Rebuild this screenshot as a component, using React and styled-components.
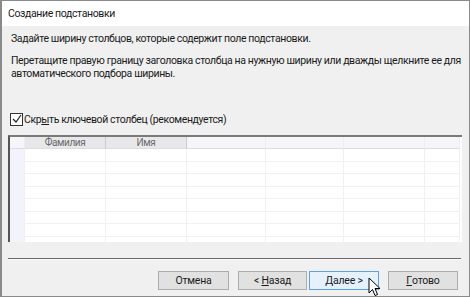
import React from 'react';
import styled, { createGlobalStyle } from 'styled-components';

const GlobalStyle = createGlobalStyle`
  html, body {
    margin: 0;
    padding: 0;
    background: #f0f0f0;
  }
  body {
    font-family: Roboto, "Noto Sans", sans-serif;
    font-size: 10.5px;
    letter-spacing: -0.38px;
    color: #1a1a1a;
  }
`;

const Window = styled.div`
  width: 470px;
  height: 297px;
  box-sizing: border-box;
  border: 1px solid #8a8a8a;
  border-left-width: 2px;
  background: #f0f0f0;
  position: relative;
  overflow: hidden;
`;

const TitleBar = styled.div`
  height: 25px;
  background: #ffffff;
  display: flex;
  align-items: center;
  padding-left: 6px;
  font-size: 10.5px;
  color: #1a1a1a;
`;

const Body = styled.div`
  display: flex;
  flex-direction: column;
  padding: 6px 8px 0 6px;
  & > * {
    flex-shrink: 0;
  }
`;

const Text = styled.p`
  margin: 0 0 ${p => p.gap || 0}px 0;
  line-height: 13px;
  padding-left: 3px;
  white-space: nowrap;
`;

const CheckRow = styled.label`
  display: flex;
  align-items: center;
  gap: 1px;
  margin-top: ${p => p.top}px;
  padding-left: 2px;
  height: 14px;
`;

const Box = styled.span`
  width: 11px;
  height: 11px;
  border: 1px solid #333;
  background: #fff;
  display: flex;
  align-items: center;
  justify-content: center;
`;

const Grid = styled.div`
  margin-top: 9px;
  height: 105px;
  width: 452px;
  background: #ffffff;
  border-top: 2px solid #7a7a7a;
  border-left: 2px solid #555;
  display: grid;
  grid-template-columns: 15px 81px 81px 79px 78px 81px 35px;
  grid-template-rows: 12px;
  grid-auto-rows: 12.5px;
  overflow: hidden;
`;

const HeadCell = styled.div`
  background: ${p => (p.blank ? '#f5f5fa' : '#e8e8eb')};
  border-right: 1px solid ${p => (p.blank ? '#eeeef2' : '#c9c9cf')};
  border-bottom: 1px solid #dcdce2;
  color: #6a6a6a;
  font-size: 10px;
  display: flex;
  align-items: center;
  justify-content: center;
  line-height: 1;
`;

const Cell = styled.div`
  background: ${p => (p.side ? '#f3f3fb' : '#ffffff')};
  border-right: 1px solid #f0f0f2;
  border-bottom: 1px solid ${p => (p.side ? '#f3f3fb' : '#f1f1f3')};
`;

const Separator = styled.div`
  margin-top: 16px;
  width: 453px;
  height: 1px;
  background: #6a6a6a;
  border-bottom: 1px solid #fafafa;
`;

const Buttons = styled.div`
  display: flex;
  justify-content: flex-end;
  padding-right: 3px;
  margin-top: 11px;
`;

const Button = styled.button`
  width: ${p => p.w || 71}px;
  height: 19px;
  margin-left: ${p => p.ml}px;
  box-sizing: border-box;
  border: 1px solid ${p => (p.active ? '#5ea2e6' : '#adadad')};
  background: ${p => (p.active ? '#e5f1fb' : '#e1e1e1')};
  font-family: Roboto, "Noto Sans", sans-serif;
  font-size: 10.5px;
  letter-spacing: -0.2px;
  color: #1a1a1a;
  padding: 0;
  display: flex;
  align-items: center;
  justify-content: center;
  u {
    text-decoration: underline;
  }
`;

const Cursor = styled.svg`
  position: absolute;
  left: 366px;
  top: 276px;
`;

const cols = ['', 'Фамилия', 'Имя', '', '', '', ''];

export default function App() {
  const rows = Array.from({ length: 8 });
  return (
    <>
      <GlobalStyle />
      <Window>
        <TitleBar>Создание подстановки</TitleBar>
        <Body>
          <Text gap={9}>Задайте ширину столбцов, которые содержит поле подстановки.</Text>
          <Text>
            Перетащите правую границу заголовка столбца на нужную ширину или дважды щелкните ее для
            <br />
            автоматического подбора ширины.
          </Text>
          <CheckRow top={32}>
            <Box>
              <svg width="10" height="10" viewBox="0 0 10 10">
                <path d="M1 5 L4 8 L9 1" fill="none" stroke="#222" strokeWidth="1.2" />
              </svg>
            </Box>
            <span>
              Скр<u>ы</u>ть ключевой столбец (рекомендуется)
            </span>
          </CheckRow>
          <Grid>
            {cols.map((c, i) => (
              <HeadCell key={'h' + i} blank={i === 0 || i > 2}>
                {c}
              </HeadCell>
            ))}
            {rows.map((_, r) =>
              cols.map((_, i) => <Cell key={r + '-' + i} side={i === 0} />)
            )}
          </Grid>
          <Separator />
          <Buttons>
            <Button ml={0}>Отмена</Button>
            <Button ml={9} w={69}>
              &lt;&nbsp;<u>Н</u>азад
            </Button>
            <Button ml={2} w={70} active>
              <u>Д</u>алее &gt;
            </Button>
            <Button ml={9} w={70}>
              <u>Г</u>отово
            </Button>
          </Buttons>
        </Body>
        <Cursor width="14" height="21" viewBox="0 0 14 21">
          <path
            d="M1 1 L1 16 L4.5 12.5 L7 18.5 L9.5 17.5 L7 11.5 L12 11.5 Z"
            fill="#ffffff"
            stroke="#000"
            strokeWidth="1"
            strokeLinejoin="round"
          />
        </Cursor>
      </Window>
    </>
  );
}
